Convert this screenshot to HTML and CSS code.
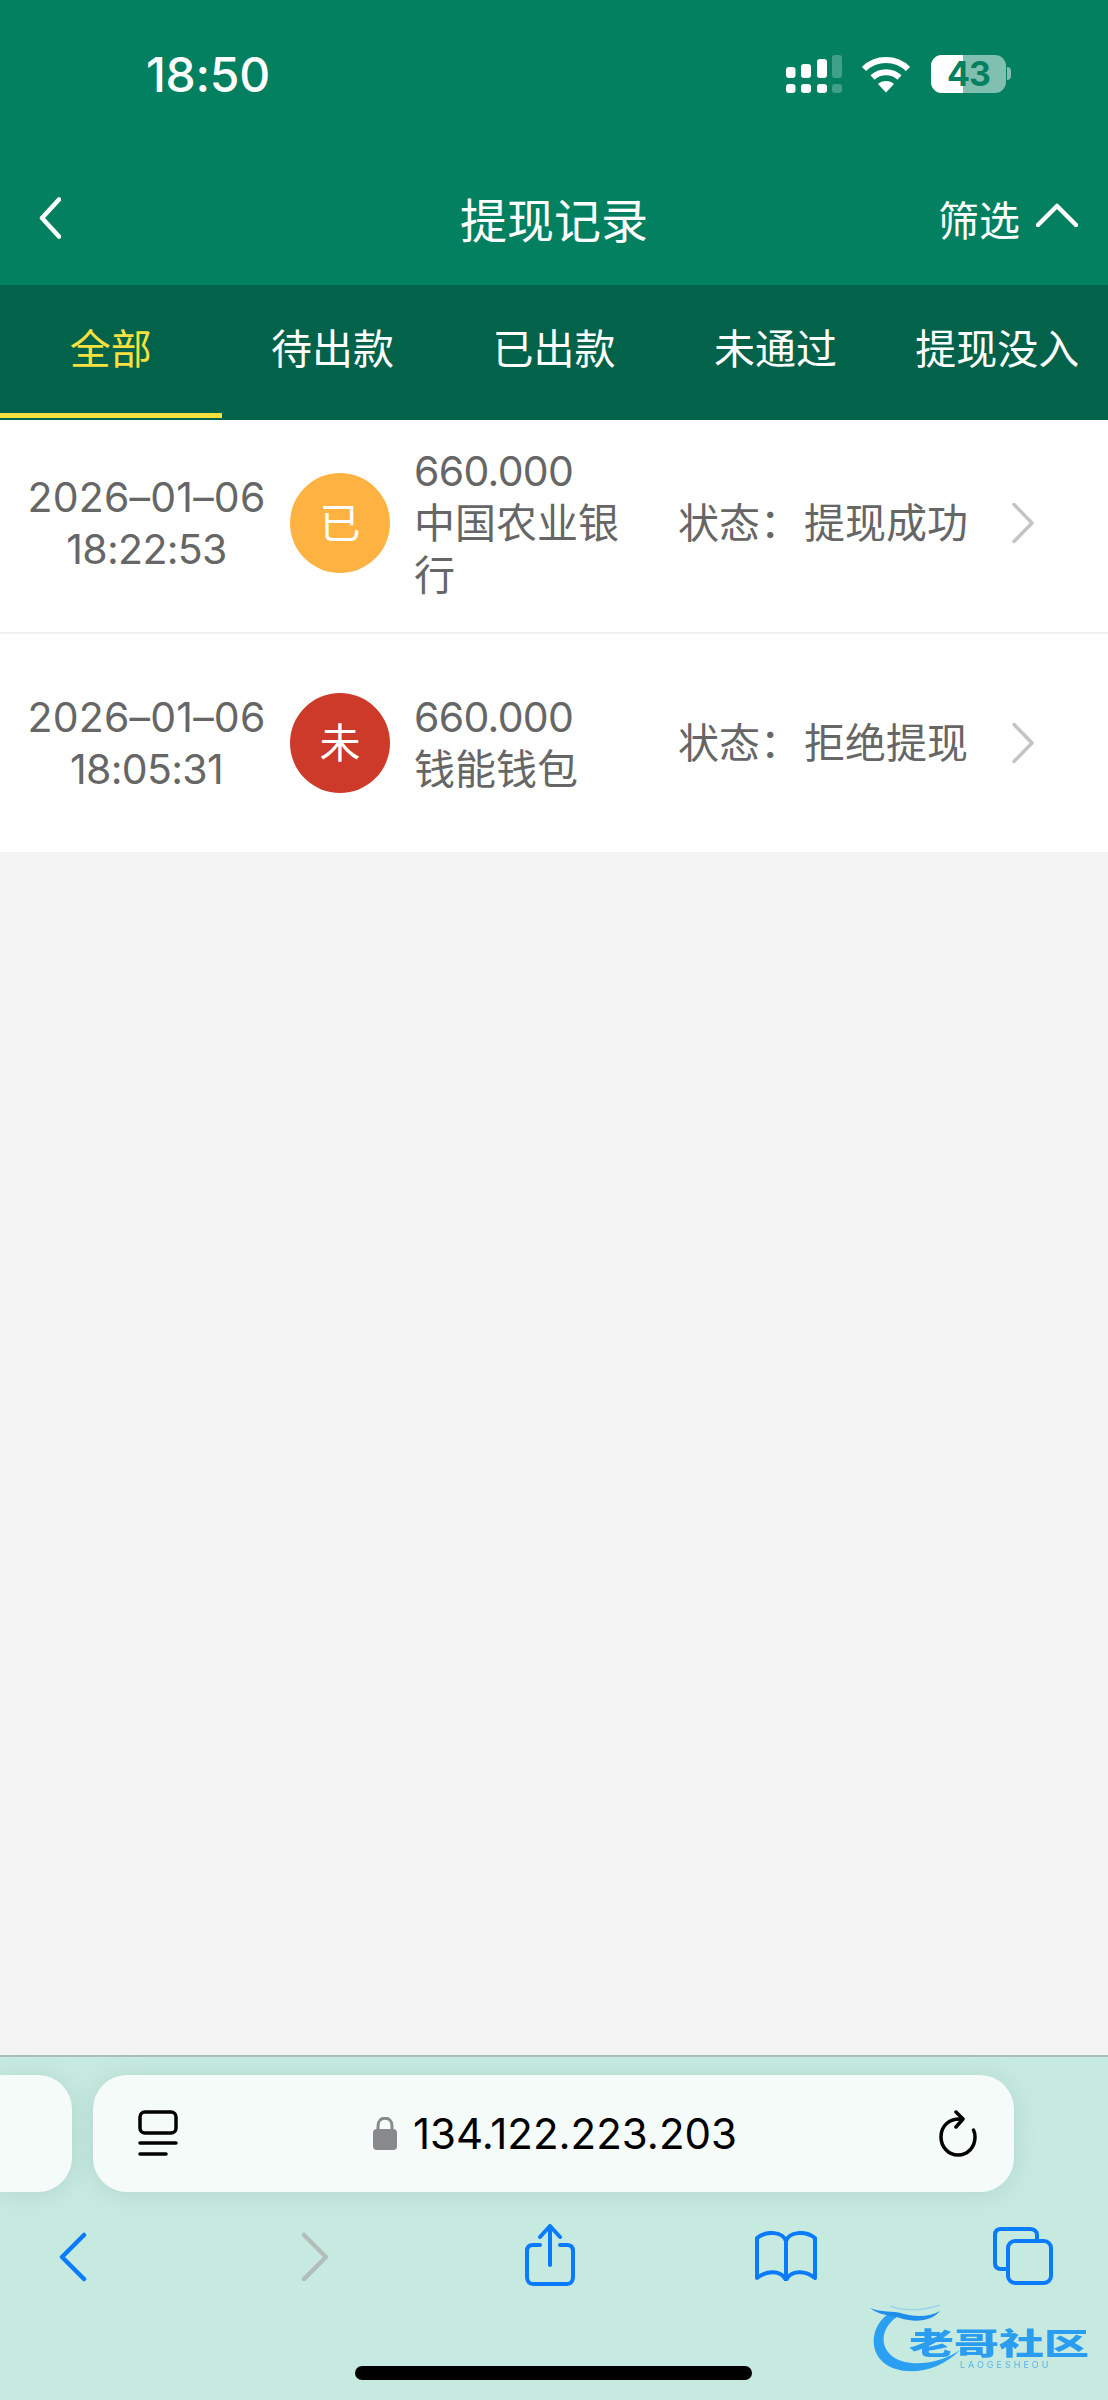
FILE: index.html
```html
<!DOCTYPE html>
<html lang="zh-CN">
<head>
<meta charset="utf-8">
<title>提现记录</title>
<link rel="stylesheet" href="styles.css">
</head>
<body>
<div class="page">
  <header class="head">
    <div class="status">
      <span class="clock">18:50</span>
      <div class="status-icons">
        <svg class="sig" width="56" height="38" viewBox="0 0 56 38" fill="#fff">
          <rect x="0" y="12" width="9.5" height="11" rx="3"/><rect x="15" y="9" width="10" height="14" rx="3"/><rect x="31" y="4" width="10" height="19" rx="3"/><rect x="46" y="0" width="10" height="23" rx="3" opacity=".25"/>
          <rect x="0" y="29" width="9.5" height="9" rx="3"/><rect x="15" y="29" width="10" height="9" rx="3"/><rect x="31" y="29" width="10" height="9" rx="3"/><rect x="46" y="29" width="10" height="9" rx="3" opacity=".25"/>
        </svg>
        <svg class="wifi" width="50" height="38" viewBox="0 0 50 38" fill="none" stroke="#fff" stroke-width="6">
          <path d="M3 14C15 2 35 2 47 14"/><path d="M11.5 22.5C19 15.500 31 15.500 38.500 22.500"/>
          <path d="M17 29C21 25 29 25 33 29L25 37.500Z" fill="#fff" stroke="none"/>
        </svg>
        <div class="battery">
          <span class="bat-fill"></span>
          <span class="bat-num">43</span>
        </div>
        <span class="bat-nub"></span>
      </div>
    </div>
    <nav class="nav">
      <svg class="nav-back" width="22" height="42" viewBox="0 0 22 42" fill="none" stroke="#fff" stroke-width="4.500" stroke-linecap="round" stroke-linejoin="round"><path d="M20 2.500L3 21L20 39.500"/></svg>
      <h1 class="nav-title">提现记录</h1>
      <div class="nav-filter">
        <span>筛选</span>
        <svg width="42" height="24" viewBox="0 0 42 24" fill="none" stroke="#fff" stroke-width="4.500" stroke-linecap="round" stroke-linejoin="round"><path d="M2 22L21 3L40 22"/></svg>
      </div>
    </nav>
    <div class="tabs">
      <div class="tab tab-on">全部</div>
      <div class="tab">待出款</div>
      <div class="tab">已出款</div>
      <div class="tab">未通过</div>
      <div class="tab">提现没入</div>
    </div>
  </header>

  <main class="list">
    <div class="row row-first">
      <div class="date"><div class="ymd">2026–01–06</div><div>18:22:53</div></div>
      <div class="badge badge-ok">已</div>
      <div class="info"><div class="amt">660.000</div><div>中国农业银行</div></div>
      <div class="state"><span class="state-key">状态：</span>提现成功</div>
      <svg class="go" width="24" height="42" viewBox="0 0 24 42" fill="none" stroke="#c4c4c4" stroke-width="3.500" stroke-linecap="round" stroke-linejoin="round"><path d="M3 2.500L21 21L3 39.500"/></svg>
    </div>
    <div class="row">
      <div class="date"><div class="ymd">2026–01–06</div><div>18:05:31</div></div>
      <div class="badge badge-no">未</div>
      <div class="info"><div class="amt">660.000</div><div>钱能钱包</div></div>
      <div class="state"><span class="state-key">状态：</span>拒绝提现</div>
      <svg class="go" width="24" height="42" viewBox="0 0 24 42" fill="none" stroke="#c4c4c4" stroke-width="3.500" stroke-linecap="round" stroke-linejoin="round"><path d="M3 2.500L21 21L3 39.500"/></svg>
    </div>
  </main>

  <div class="fill"></div>

  <footer class="safari">
    <div class="bars">
      <div class="url-prev"></div>
      <div class="url">
        <svg class="reader" width="40" height="48" viewBox="0 0 40 48" fill="none" stroke="#000" stroke-width="3.500" stroke-linecap="round">
          <rect x="2" y="2" width="36" height="21" rx="5"/><path d="M2 33H38"/><path d="M2 44H28"/>
        </svg>
        <div class="addr">
          <svg width="24" height="33" viewBox="0 0 24 33"><path d="M5 14V9C5 -1.500 19 -1.500 19 9V14" fill="none" stroke="#87898b" stroke-width="3"/><rect x="0" y="12" width="24" height="21" rx="4" fill="#87898b"/></svg>
          <span>134.122.223.203</span>
        </div>
        <svg class="reload" width="38" height="47" viewBox="0 0 38 47" fill="none" stroke="#000" stroke-width="3.500" stroke-linecap="round" stroke-linejoin="round">
          <path d="M23 9C10 8 2 16 2 27C2 37 9.500 45 19 45C29 45 36 37 36 27C36 24 35.500 22 34.500 20"/><path d="M17 2L24 9L17 17"/>
        </svg>
      </div>
    </div>
    <div class="tools">
      <svg class="t-back" width="28" height="50" viewBox="0 0 28 50" fill="none" stroke="#0a7aff" stroke-width="4.500" stroke-linecap="round" stroke-linejoin="round"><path d="M25 3L3 25L25 47"/></svg>
      <svg class="t-fwd" width="28" height="50" viewBox="0 0 28 50" fill="none" stroke="#b3bdb9" stroke-width="4.500" stroke-linecap="round" stroke-linejoin="round"><path d="M3 3L25 25L3 47"/></svg>
      <svg class="t-share" width="50" height="62" viewBox="0 0 50 62" fill="none" stroke="#0a7aff" stroke-width="4" stroke-linecap="round" stroke-linejoin="round"><path d="M15 21H8C4 21 2 23 2 27V53C2 57 4 60 8 60H42C46 60 48 57 48 53V27C48 23 46 21 42 21H35"/><path d="M25 41V3"/><path d="M15 13L25 2L35 13"/></svg>
      <svg class="t-book" width="62" height="50" viewBox="0 0 62 50" fill="none" stroke="#0a7aff" stroke-width="4" stroke-linecap="round" stroke-linejoin="round"><path d="M31 10C28 1 12 -1 2 7V47C12 39 26 39 31 49C36 39 50 39 60 47V7C50 -1 34 1 31 10Z"/><path d="M31 10V48"/></svg>
      <svg class="t-tabs" width="60" height="58" viewBox="0 0 60 58" fill="none" stroke="#0a7aff" stroke-width="4" stroke-linejoin="round"><path d="M14 42H8C4 42 2 40 2 36V8C2 4 4 2 8 2H37C41 2 44 4 44 8V13"/><rect x="15" y="14" width="43" height="42" rx="7"/></svg>
    </div>
    <div class="homebar"></div>
    <div class="logo">
      <svg class="logo-art" width="110" height="72" viewBox="0 0 110 72">
        <path d="M21 9C2 20 -3 46 14 60C30 73 66 72 90 47C66 63 36 64 22 53C8 42 12 22 30 12Z" fill="#2b9ff2"/>
        <path d="M0 5C12 10 22 7 34 11C46 14 60 14 70 8C62 18 46 20 30 15C20 12 8 12 0 5Z" fill="#1f8eea"/>
        <path d="M20 3C34 8 52 8 70 2" fill="none" stroke="#9fd3ea" stroke-width="1.500"/>
      </svg>
      <span class="logo-name">老哥社区</span>
      <span class="logo-sub">LAOGESHEOU</span>
    </div>
  </footer>
</div>
</body>
</html>
```

FILE: styles.css
```css
* { box-sizing: border-box; }
html, body { margin: 0; padding: 0; }
body {
  width: 1108px;
  height: 2400px;
  overflow: hidden;
  font-family: Inter, "Noto Sans CJK SC", sans-serif;
  background: #f3f3f3;
}
.page { display: flex; flex-direction: column; height: 2400px; position: relative; }

.head { background: #028060; color: #fff; }
.status {
  height: 100px;
  padding: 50px 97px 0 146px;
  display: flex;
  justify-content: space-between;
  align-items: flex-start;
}
.clock { font-size: 48px; line-height: 50px; font-weight: 500; letter-spacing: -.3px; }
.status-icons { display: flex; align-items: flex-start; padding-top: 5px; }
.sig { margin-right: 19px; }
.wifi { margin-right: 20px; }
.battery {
  position: relative;
  width: 75px;
  height: 38px;
  border-radius: 11px;
  background: rgba(255,255,255,.5);
  text-align: center;
}
.bat-fill { position: absolute; left: 0; top: 0; bottom: 0; width: 32px; background: #fff; border-radius: 11px 0 0 11px; }
.bat-num { position: relative; display: block; height: 38px; font-size: 34px; line-height: 38px; font-weight: 700; color: #028060; letter-spacing: -1px; }
.bat-nub { width: 4px; height: 13px; margin: 12px 0 0 1px; background: rgba(255,255,255,.5); border-radius: 0 4px 4px 0; }

.nav {
  height: 185px;
  display: grid;
  grid-template-columns: 1fr auto 1fr;
  align-items: center;
  padding: 51px 30px 0;
}
.nav-back { margin-left: 9px; }
.nav-title { margin: 0; font-size: 47px; line-height: 60px; font-weight: 400; font-family: "Noto Sans CJK SC", sans-serif; }
.nav-filter {
  justify-self: end;
  display: flex;
  align-items: center;
  gap: 16px;
  font-size: 41px;
  line-height: 56px;
  font-family: "Noto Sans CJK SC", sans-serif;
}
.nav-filter svg { margin-top: -6px; }

.tabs { height: 135px; background: #03624a; display: flex; }
.tab {
  flex: 1 1 0;
  text-align: center;
  font-size: 41px;
  line-height: 56px;
  padding-top: 33px;
  white-space: nowrap;
  font-family: "Noto Sans CJK SC", sans-serif;
}
.tab-on { color: #f7e13f; position: relative; }
.tab-on::after {
  content: "";
  position: absolute;
  left: 0;
  right: 0;
  top: 128px;
  height: 5px;
  background: #f7e13f;
}

.list { background: #fff; color: #666; }
.row {
  display: flex;
  align-items: center;
  height: 218px;
  padding-left: 21px;
  font-size: 41px;
  line-height: 52px;
}
.row-first { height: 214px; padding-bottom: 6px; border-bottom: 2px solid #f1f1f1; }
.date { width: 251px; text-align: center; white-space: nowrap; letter-spacing: -.7px; }
.ymd { letter-spacing: .2px; }
.amt { letter-spacing: -.7px; }
.badge {
  width: 100px;
  height: 100px;
  margin-left: 18px;
  border-radius: 50%;
  color: #fff;
  text-align: center;
  line-height: 100px;
  flex: none;
}
.badge-ok { background: #feb241; }
.badge-no { background: #cd3a29; }
.info { width: 222px; margin-left: 24px; word-break: break-all; }
.state { width: 320px; margin-left: 42px; white-space: nowrap; }
.state-key { margin-right: 3px; }
.go { margin-left: 13px; }

.fill { flex: 1 1 auto; }

.safari {
  height: 345px;
  background: #c7eae0;
  border-top: 2px solid #aebdb8;
  position: relative;
}
.bars { display: flex; gap: 21px; padding-top: 18px; height: 135px; }
.url-prev, .url {
  height: 117px;
  background: #f5fbf9;
  box-shadow: 0 2px 24px rgba(60,120,100,.16);
}
.url-prev { width: 72px; border-radius: 0 34px 34px 0; flex: none; }
.url {
  width: 921px;
  flex: none;
  border-radius: 34px;
  display: flex;
  align-items: center;
  justify-content: space-between;
  padding: 0 37px 0 45px;
  position: relative;
}
.addr {
  display: flex;
  align-items: center;
  gap: 16px;
  font-size: 42px;
  line-height: 50px;
  color: #000;
  position: absolute;
  left: 280px;
}
.tools { display: flex; align-items: flex-start; padding: 32px 0 0 59px; }
.t-back { margin-top: 8px; }
.t-fwd { margin: 8px 0 0 214px; }
.t-share { margin-left: 196px; }
.t-book { margin: 7px 0 0 180px; }
.t-tabs { margin: 3px 0 0 176px; }
.homebar {
  position: absolute;
  left: 355px;
  top: 309px;
  width: 397px;
  height: 14px;
  background: #000;
  border-radius: 7px;
}

.logo { position: absolute; left: 870px; top: 246px; width: 230px; height: 74px; color: #2b9bf0; }
.logo-art { position: absolute; left: 0; top: 0; }
.logo-name {
  position: absolute;
  left: 39px;
  top: 24px;
  font-size: 45px;
  line-height: 28px;
  height: 28px;
  font-weight: 900;
  white-space: nowrap;
  color: #2a9df0;
  transform: scaleY(.66);
  filter: blur(.7px);
  font-family: "Noto Sans CJK SC", sans-serif;
}
.logo-sub {
  position: absolute;
  left: 90px;
  top: 56px;
  font-size: 9px;
  line-height: 11px;
  letter-spacing: 3px;
  white-space: nowrap;
  filter: blur(.4px);
  opacity: .7;
}
```
